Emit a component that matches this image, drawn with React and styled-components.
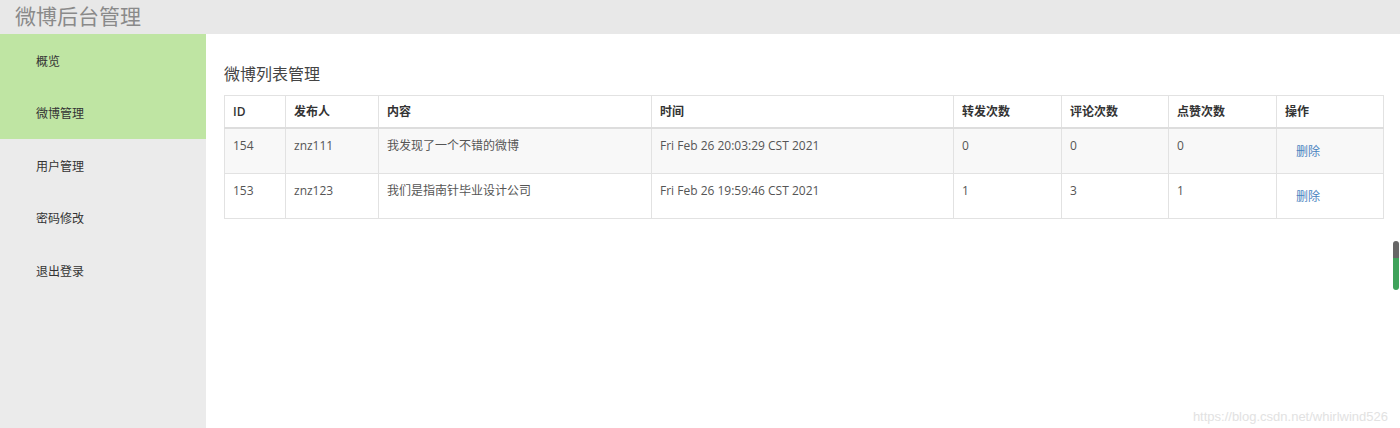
import React from 'react'
import styled, { createGlobalStyle } from 'styled-components'

const GlobalStyle = createGlobalStyle`
  html, body {
    margin: 0;
    padding: 0;
    background: #fff;
  }
  body {
    font-family: "Open Sans", "Noto Sans CJK SC", sans-serif;
    color: #555;
  }
`

const Page = styled.div`
  position: relative;
  width: 1400px;
  height: 428px;
  display: flex;
  flex-direction: column;
  overflow: hidden;
`

const Header = styled.div`
  height: 34px;
  flex-shrink: 0;
  background: #e8e8e8;
  padding-left: 15px;
  box-sizing: border-box;
`

const Brand = styled.div`
  font-family: "Noto Sans CJK SC", sans-serif;
  font-size: 21px;
  line-height: 30px;
  color: #8a8a8a;
`

const Body = styled.div`
  flex: 1;
  display: flex;
`

const Sidebar = styled.ul`
  width: 206px;
  flex-shrink: 0;
  margin: 0;
  padding: 0;
  list-style: none;
  background: #ebebeb;
`

const NavItem = styled.li`
  height: 52.5px;
  display: flex;
  align-items: center;
  padding-left: 36px;
  font-family: "Noto Sans CJK SC", sans-serif;
  font-size: 12px;
  color: #333;
  background: ${p => (p.active ? '#bfe5a3' : 'transparent')};
`

const Content = styled.div`
  flex: 1;
  padding: 27px 17px 0 18px;
`

const Title = styled.h3`
  margin: 0 0 10px;
  font-family: "Noto Sans CJK SC", sans-serif;
  font-size: 16px;
  font-weight: normal;
  line-height: 24px;
  color: #444;
`

const Table = styled.table`
  width: 1159px;
  border-collapse: collapse;
  table-layout: fixed;
  font-size: 12px;
  border: 1px solid #ddd;
`

const Th = styled.th`
  text-align: left;
  padding: 7px 8px 7px;
  line-height: 17px;
  font-weight: 600;
  color: #333;
  border: 1px solid #e2e2e2;
  border-bottom: 2px solid #ddd;
  font-family: "Open Sans", "Noto Sans CJK SC", sans-serif;
`

const Row = styled.tr`
  background: ${p => (p.striped ? '#f8f8f8' : '#fff')};
`

const Td = styled.td`
  padding: 8px 8px 0;
  height: 36px;
  line-height: 17px;
  vertical-align: top;
  color: #555;
  border: 1px solid #e2e2e2;
  font-family: "Open Sans", "Noto Sans CJK SC", sans-serif;
`

const LinkButton = styled.button`
  border: none;
  background: none;
  padding: 6px 12px 6px 11px;
  margin-top: -1px;
  font-family: "Noto Sans CJK SC", sans-serif;
  font-size: 12px;
  line-height: 17px;
  color: #4a83c0;
  cursor: pointer;
`

const Scroll = styled.div`
  position: absolute;
  right: 1px;
  top: 241px;
  width: 6px;
  height: 49px;
  border-radius: 3px;
  background: linear-gradient(#666 0, #666 17px, #3fa35b 17px);
`

const Watermark = styled.div`
  position: absolute;
  right: 12px;
  bottom: 4px;
  font-family: "Liberation Sans", sans-serif;
  font-size: 13px;
  color: #e2e2e2;
`

const widths = [61, 93, 273, 302, 108, 107, 108, 107]
const heads = ['ID', '发布人', '内容', '时间', '转发次数', '评论次数', '点赞次数', '操作']

const rows = [
  { id: 154, user: 'znz111', text: '我发现了一个不错的微博', time: 'Fri Feb 26 20:03:29 CST 2021', fw: 0, cm: 0, lk: 0 },
  { id: 153, user: 'znz123', text: '我们是指南针毕业设计公司', time: 'Fri Feb 26 19:59:46 CST 2021', fw: 1, cm: 3, lk: 1 },
]

const nav = ['概览', '微博管理', '用户管理', '密码修改', '退出登录']

export default function App() {
  return (
    <Page>
      <GlobalStyle />
      <Header>
        <Brand>微博后台管理</Brand>
      </Header>
      <Body>
        <Sidebar>
          {nav.map((n, i) => (
            <NavItem key={n} active={i < 2}>{n}</NavItem>
          ))}
        </Sidebar>
        <Content>
          <Title>微博列表管理</Title>
          <Table>
            <colgroup>
              {widths.map((w, i) => <col key={i} style={{ width: w }} />)}
            </colgroup>
            <thead>
              <tr>
                {heads.map(h => <Th key={h}>{h}</Th>)}
              </tr>
            </thead>
            <tbody>
              {rows.map((r, i) => (
                <Row key={r.id} striped={i % 2 === 0}>
                  <Td>{r.id}</Td>
                  <Td>{r.user}</Td>
                  <Td>{r.text}</Td>
                  <Td>{r.time}</Td>
                  <Td>{r.fw}</Td>
                  <Td>{r.cm}</Td>
                  <Td>{r.lk}</Td>
                  <Td><LinkButton>删除</LinkButton></Td>
                </Row>
              ))}
            </tbody>
          </Table>
        </Content>
      </Body>
      <Scroll />
      <Watermark>https://blog.csdn.net/whirlwind526</Watermark>
    </Page>
  )
}
